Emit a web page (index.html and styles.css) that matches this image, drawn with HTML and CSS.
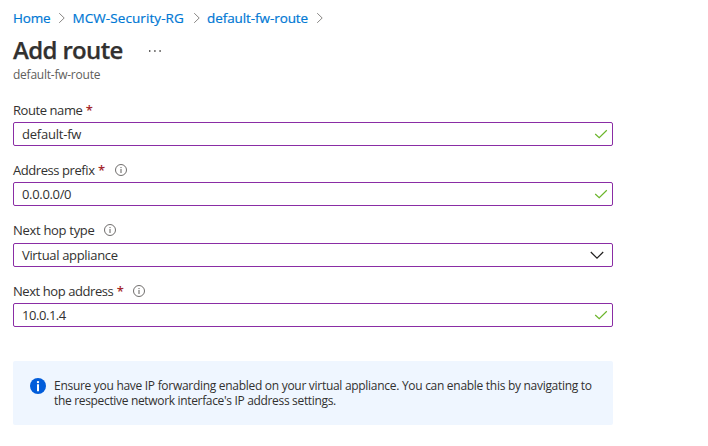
FILE: index.html
```html
<!DOCTYPE html>
<html lang="en">
<head>
<meta charset="utf-8">
<title>Add route</title>
<link rel="stylesheet" href="styles.css">
</head>
<body>
<svg class="defs" aria-hidden="true">
  <symbol id="crumb" viewBox="0 0 8 12"><path d="M1.2 1.2 6.2 6 1.2 10.8" fill="none" stroke="#8a8886"/></symbol>
  <symbol id="info" viewBox="0 0 12 12"><circle cx="6" cy="6" r="5.5" fill="none" stroke="#605e5c" stroke-width=".9"/><path d="M6 5v4M6 3v1.1" stroke="#605e5c" stroke-width="1"/></symbol>
  <symbol id="check" viewBox="0 0 14 10"><path d="M1.2 5 5.2 8.6 12.8 1.2" fill="none" stroke="#6bb52b" stroke-width="1.2"/></symbol>
</svg>
<nav class="breadcrumb">
  <a class="c-home">Home</a><svg class="sep"><use href="#crumb"/></svg>
  <a class="c-group">MCW-Security-RG</a><svg class="sep"><use href="#crumb"/></svg>
  <a class="c-route">default-fw-route</a><svg class="sep"><use href="#crumb"/></svg>
</nav>
<header class="heading">
  <h1>Add route</h1>
  <svg class="more" viewBox="0 0 12 2"><path d="M0 .3h1.4v1.4H0zM5.2.3h1.4v1.4H5.2zM10.4.3h1.4v1.4h-1.4z" fill="#323130"/></svg>
</header>
<p class="subtitle">default-fw-route</p>
<main class="form">
  <section class="field">
    <div class="label"><span>Route name</span><b>*</b></div>
    <div class="input"><span class="v-name">default-fw</span><svg class="check"><use href="#check"/></svg></div>
  </section>
  <section class="field">
    <div class="label"><span>Address prefix</span><b>*</b><svg class="info"><use href="#info"/></svg></div>
    <div class="input"><span>0.0.0.0/0</span><svg class="check"><use href="#check"/></svg></div>
  </section>
  <section class="field lower">
    <div class="label"><span class="l-type">Next hop type</span><svg class="info"><use href="#info"/></svg></div>
    <div class="input"><span>Virtual appliance</span><svg class="chevron" viewBox="0 0 14 9"><path d="M.8 1 7 7.2 13.2 1" fill="none" stroke="#201f1e" stroke-width="1.2"/></svg></div>
  </section>
  <section class="field">
    <div class="label"><span>Next hop address</span><b>*</b><svg class="info"><use href="#info"/></svg></div>
    <div class="input"><span class="v-address">10.0.1.4</span><svg class="check"><use href="#check"/></svg></div>
  </section>
</main>
<aside class="notice">
  <svg class="notice-icon" viewBox="0 0 16 16"><circle cx="8" cy="8" r="8" fill="#015cda"/><circle cx="8" cy="4.1" r="1.2" fill="#fff"/><path d="M7 6.3h2v7H7z" fill="#fff"/></svg>
  <p><span class="n-line">Ensure you have IP forwarding enabled on your virtual appliance. You can enable this by navigating to</span><span class="n-line n-second">the respective network interface's IP address settings.</span></p>
</aside>
</body>
</html>
```
FILE: styles.css
```css
* { box-sizing: border-box; }
body {
  margin: 0;
  padding: 8px 0 0 13px;
  width: 708px;
  height: 446px;
  overflow: hidden;
  background: #fff;
  color: #323130;
  font: 13px/20px "Open Sans", "Noto Sans", sans-serif;
  letter-spacing: -.2px;
}
span, a, h1 { white-space: nowrap; }
svg { flex: none; display: block; }
.defs { position: absolute; width: 0; height: 0; }
.breadcrumb { display: flex; align-items: center; height: 20px; color: #0078d4; font-size: 13.5px; -webkit-text-stroke: .2px #0078d4; }
.c-home { width: 37px; letter-spacing: -.15px; }
.c-group { width: 112px; margin-left: -.5px; letter-spacing: .08px; }
.c-route { width: 102px; margin-left: -.5px; letter-spacing: -.08px; }
.sep { width: 8px; height: 12px; margin: 0 7px 0 8px; }
.c-route + .sep { margin-left: 7px; }
.heading { display: flex; align-items: center; height: 38px; margin-top: 3px; }
h1 { width: 110px; margin: 0; font-size: 24px; line-height: 38px; font-weight: 600; letter-spacing: -.65px; -webkit-text-stroke: .25px #323130; }
.more { width: 12px; height: 2px; margin: 2px 0 0 26px; }
.subtitle { margin: -2px 0 0; font-size: 12px; line-height: 16px; color: #605e5c; letter-spacing: -.24px; }
.form { width: 600px; margin-top: 17px; }
.field { height: 60px; }
.field.lower { height: 61px; }
.field.lower .label { margin-bottom: 3px; }
.label { display: flex; align-items: center; height: 20px; margin-bottom: 2px; letter-spacing: -.43px; }
.label .l-type { letter-spacing: -.3px; }
.label b { width: 6px; margin-left: 3.5px; color: #a4262c; font-weight: 600; letter-spacing: 0; }
.info { width: 12px; height: 12px; margin-left: 10.5px; }
.l-type + .info { margin-left: 9px; }
.input {
  display: flex;
  align-items: center;
  justify-content: space-between;
  height: 24px;
  padding: 0 4px 0 8px;
  border: 1px solid #8a2da5;
  border-radius: 2px;
  letter-spacing: -.33px;
}
.v-name { letter-spacing: -.22px; }
.v-address { letter-spacing: -.45px; }
.check { width: 14px; height: 10px; }
.chevron { width: 14px; height: 9px; margin-right: 4px; }
.notice {
  display: flex;
  width: 600px;
  height: 64px;
  margin-top: 20px;
  padding: 17px 16px 17px 17px;
  background: #eff6ff;
  border-radius: 2px;
}
.notice-icon { width: 16px; height: 16px; }
.notice p { margin: 0 0 0 8px; font-size: 12px; line-height: 15px; }
.n-line { display: block; letter-spacing: -.29px; }
.n-line.n-second { letter-spacing: -.33px; }
```
